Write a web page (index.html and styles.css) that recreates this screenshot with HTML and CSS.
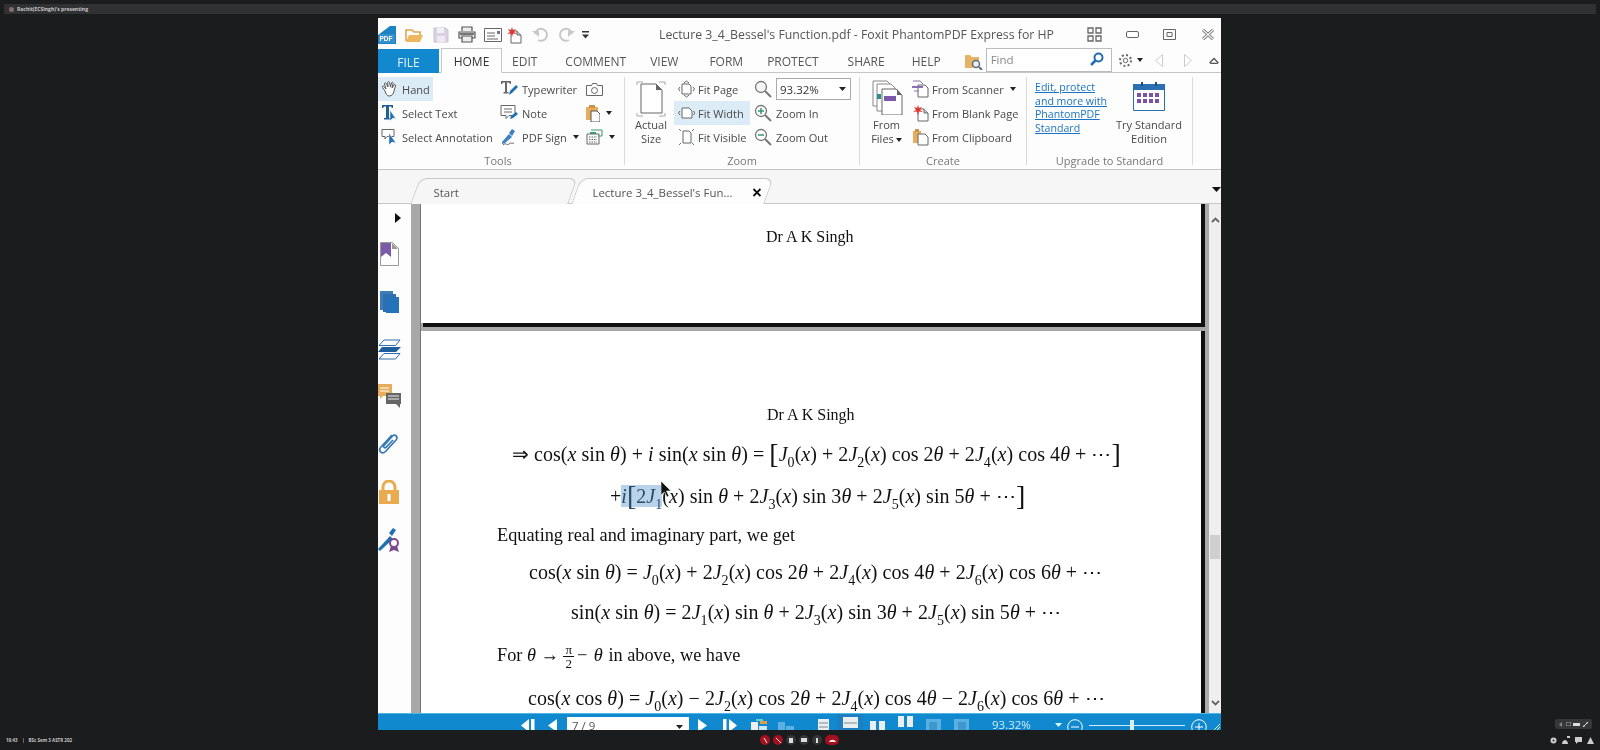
FILE: index.html
```html
<!DOCTYPE html>
<html lang="en">
<head>
<meta charset="utf-8">
<title>Lecture 3_4_Bessel's Function.pdf - Foxit PhantomPDF Express for HP</title>
<link rel="stylesheet" href="styles.css">
</head>
<body>
<header class="meetbar"><span class="meetdot"></span><span class="meetname">Rachit(ECSingh)'s presenting</span></header>

<div class="window">
  <div class="titlebar">
    <svg class="qa-logo" width="18" height="18" viewBox="0 0 18 18"><path d="M0 18V9L12 0h6v18z" fill="#1b82c4"/><path d="M1 8h16v9H1z" fill="#fff" opacity=".12"/><text x="1.5" y="15" class="logo-txt">PDF</text></svg>
    <svg class="qa ml9" width="19" height="16" viewBox="0 0 19 16"><path d="M1 14V3h6l2 2h6v3" fill="none" stroke="#e0a54c" stroke-width="1.6"/><path d="M1 15l3-7h14l-3 7z" fill="#efb75f"/></svg>
    <svg class="qa ml9" width="16" height="16" viewBox="0 0 16 16"><path d="M1 1h12l2 2v12H1z" fill="#d9d2e2" stroke="#c9c1d5"/><path d="M4 1h7v5H4z" fill="#f2eff5"/><path d="M4 9h8v6H4z" fill="#eee9f1"/></svg>
    <svg class="qa ml9" width="18" height="17" viewBox="0 0 18 17"><path d="M4 5V1h10v4M4 12H1V6h16v6h-3M4 10h10v6H4z" fill="#eee" stroke="#555" stroke-width="1.2"/><path d="M2 7h14v2H2z" fill="#777"/></svg>
    <svg class="qa ml8" width="18" height="14" viewBox="0 0 18 14"><path d="M.5.5h17v13H.5z" fill="#fff" stroke="#666"/><path d="M3 5h8M3 8h8M3 11h11" stroke="#666"/><path d="M13 3h3v3h-3z" fill="#777"/></svg>
    <svg class="qa ml4" width="16" height="18" viewBox="0 0 16 18"><path d="M5 5h6l4 4v8H5z" fill="#fff" stroke="#666"/><path d="M11 5v4h4" fill="#ccc" stroke="#666"/><path d="M6 1l1 3 3-1-2 3 3 2-4-.5L6 11 5 7.500 1 8l3-2-2-3 3 1z" fill="#e2332c"/></svg>
    <svg class="qa ml10" width="17" height="15" viewBox="0 0 17 15"><path d="M3 7a6 6 0 1 1 3 6" fill="none" stroke="#c9c9c9" stroke-width="2"/><path d="M0 4h7v6z" fill="#c9c9c9"/></svg>
    <svg class="qa ml9" width="17" height="15" viewBox="0 0 17 15"><path d="M14 7a6 6 0 1 0-3 6" fill="none" stroke="#c9c9c9" stroke-width="2"/><path d="M17 4h-7v6z" fill="#c9c9c9"/></svg>
    <svg class="qa ml7" width="7" height="8" viewBox="0 0 7 8"><path d="M0 0h7v1.500H0zM0 3.500h7L3.500 7.500z" fill="#333"/></svg>
    <span class="title">Lecture 3_4_Bessel's Function.pdf - Foxit PhantomPDF Express for HP</span>
    <svg class="ctl-grid" width="15" height="15" viewBox="0 0 15 15"><path d="M1 1h5v5H1zM9 1h5v5H9zM1 9h5v5H1zM9 9h5v5H9z" fill="none" stroke="#666" stroke-width="1.300"/></svg>
    <svg class="ctl ml24" width="13" height="7" viewBox="0 0 13 7"><rect x=".5" y=".5" width="12" height="6" rx="1.500" fill="#fff" stroke="#666"/></svg>
    <svg class="ctl ml24" width="13" height="11" viewBox="0 0 13 11"><path d="M.5.5h12v10H.5z" fill="none" stroke="#666"/><path d="M4 3.500h5v4H4z" fill="none" stroke="#666"/></svg>
    <svg class="ctl ml26" width="12" height="11" viewBox="0 0 12 11"><path d="M1 1l10 9M11 1L1 10" stroke="#666" stroke-width="3"/><path d="M1 1l10 9M11 1L1 10" stroke="#fff" stroke-width="1.200"/></svg>
  </div>

  <nav class="tabsrow">
    <span class="t-file">FILE</span>
    <span class="t-home">HOME</span>
    <span class="t-item t-edit">EDIT</span>
    <span class="t-item t-comment">COMMENT</span>
    <span class="t-item t-view">VIEW</span>
    <span class="t-item t-form">FORM</span>
    <span class="t-item t-protect">PROTECT</span>
    <span class="t-item t-share">SHARE</span>
    <span class="t-item t-help">HELP</span>
    <svg class="findfolder" width="18" height="16" viewBox="0 0 18 16"><path d="M0 14V1h5l2 2h7v4H8v7z" fill="#e6b264"/><circle cx="11" cy="10" r="3.500" fill="#eee" stroke="#5b6f80" stroke-width="1.500"/><path d="M14 13l3 3" stroke="#5b6f80" stroke-width="2"/></svg>
    <div class="findbox"><span class="findtxt">Find</span><svg width="14" height="14" viewBox="0 0 14 14"><circle cx="8.500" cy="5.500" r="4" fill="none" stroke="#1f6fb5" stroke-width="2"/><path d="M5.500 8.500L1 13" stroke="#1f6fb5" stroke-width="2.500"/></svg></div>
    <svg class="gear" width="15" height="15" viewBox="0 0 15 15"><circle cx="7.500" cy="7.500" r="2.200" fill="none" stroke="#666"/><circle cx="7.500" cy="7.500" r="5.500" fill="none" stroke="#666" stroke-width="2" stroke-dasharray="2 2.300"/></svg>
    <svg class="tri-d" width="6" height="4" viewBox="0 0 6 4"><path d="M0 0h6L3 4z" fill="#222"/></svg>
    <svg class="nav-l" width="8" height="13" viewBox="0 0 8 13"><path d="M7.500.5v12L.5 6.500z" fill="#fff" stroke="#ccc"/></svg>
    <svg class="nav-r" width="8" height="13" viewBox="0 0 8 13"><path d="M.5.5v12l7-6z" fill="#fff" stroke="#ccc"/></svg>
    <svg class="nav-c" width="10" height="7" viewBox="0 0 10 7"><path d="M1 5.500L5 1.500l4 4-1 1H2z" fill="none" stroke="#555" stroke-width="1.300"/></svg>
  </nav>

  <section class="ribbon">
    <div class="group g-tools">
      <div class="gbody">
        <div class="col c-t1">
          <div class="ri sel-hand"><svg class="ic" width="18" height="18" viewBox="0 0 18 18"><path d="M4 11L1.500 7.500c-.8-1 .6-2 1.500-1L5 9 3.500 4c-.3-1.200 1.300-1.700 1.800-.5L7 7l-.3-4.500c0-1.200 1.700-1.200 1.800 0L9.500 7l1-4c.3-1.100 1.800-.8 1.600.4L11 8l2-3c.7-1 2-.2 1.500.9L13 11c-.5 3-2 5-5 5-2 0-3-2-4-5z" fill="#fff" stroke="#555"/></svg><span>Hand</span></div>
          <div class="ri"><svg class="ic" width="18" height="18" viewBox="0 0 18 18"><path d="M1 1h11v3h-1l-1-1.500H8V14h2v1.500H3V14h2V2.500H3L2 4H1z" fill="#1f5f94"/><path d="M9 6v11l3-3 3 1z" fill="#1f6fb5" stroke="#fff" stroke-width=".5"/></svg><span>Select Text</span></div>
          <div class="ri"><svg class="ic" width="18" height="18" viewBox="0 0 18 18"><path d="M1 1.500h12v7H6l-2 2.500v-2.500H1z" fill="#fff" stroke="#666"/><path d="M8 5v12l3-3 4 1z" fill="#1f6fb5" stroke="#fff" stroke-width=".5"/></svg><span>Select Annotation</span></div>
        </div>
        <div class="col c-t2">
          <div class="ri"><svg class="ic" width="19" height="18" viewBox="0 0 19 18"><path d="M1 1h10v3h-1L9 2.500H7V12h1.500v1.500h-5V12H5V2.500H3L2 4H1z" fill="#666"/><path d="M9 15l1-4 6-6 2 2-6 6z" fill="#1f6fb5"/></svg><span>Typewriter</span></div>
          <div class="ri"><svg class="ic" width="19" height="18" viewBox="0 0 19 18"><path d="M1 1.500h14v10H9l-3 3v-3H1z" fill="#fff" stroke="#666"/><path d="M4 5h8M4 8h8" stroke="#666"/><path d="M10 15l1-3 5-4 2 2-5 4z" fill="#1f6fb5"/></svg><span>Note</span></div>
          <div class="ri"><svg class="ic" width="19" height="18" viewBox="0 0 19 18"><path d="M2 14l7-8 3 3-7 6-3 1z" fill="#3d7fbf"/><path d="M9 5l3-4 3 2-3 5z" fill="#3d7fbf"/><path d="M3 17c3-3 4 1 6-1s3 0 5-1" fill="none" stroke="#666"/></svg><span>PDF Sign</span><svg class="tri" width="6" height="4" viewBox="0 0 6 4"><path d="M0 0h6L3 4z" fill="#222"/></svg></div>
        </div>
        <div class="col c-t3">
          <div class="ri"><svg width="17" height="13" viewBox="0 0 17 13"><path d="M.5 2.500h5l1-2h4l1 2h5v10H.5z" fill="#fff" stroke="#666"/><circle cx="8.500" cy="7.500" r="3" fill="none" stroke="#666"/></svg></div>
          <div class="ri"><svg width="14" height="18" viewBox="0 0 14 18"><path d="M0 3h12v13H0z" fill="#e7ad5c"/><path d="M3 1h6v3H3z" fill="#c89449"/><path d="M5 7h6l3 3v8H5z" fill="#fff" stroke="#555"/></svg><svg class="tri" width="6" height="4" viewBox="0 0 6 4"><path d="M0 0h6L3 4z" fill="#222"/></svg></div>
          <div class="ri"><svg width="17" height="16" viewBox="0 0 17 16"><path d="M1 5h12v10H1z" fill="#fff" stroke="#666"/><path d="M3 8h8M3 10.500h8M3 13h8" stroke="#666" stroke-dasharray="1.500 1"/><path d="M5 1h11v6h-4" fill="none" stroke="#3b9a72"/><path d="M4 3h6v2H4z" fill="#3b9a72"/></svg><svg class="tri" width="6" height="4" viewBox="0 0 6 4"><path d="M0 0h6L3 4z" fill="#222"/></svg></div>
        </div>
      </div>
      <div class="glabel">Tools</div>
    </div>

    <div class="group g-zoom">
      <div class="gbody">
        <div class="big b-actual">
          <svg width="30" height="36" viewBox="0 0 30 36"><path d="M1 4V1h6M23 1h6v3M1 32v3h6M23 35h6v-3" fill="none" stroke="#aaa"/><path d="M5 3h15l6 6v23H5z" fill="#fff" stroke="#666"/><path d="M20 3v6h6z" fill="#666"/></svg>
          <span>Actual<br>Size</span>
        </div>
        <div class="col c-z1">
          <div class="ri"><svg class="ic" width="17" height="18" viewBox="0 0 17 18"><path d="M5 4h6l2 2v8H4V4z" fill="#fff" stroke="#666"/><path d="M6 3l2.500-2L11 3M6 15l2.500 2 2.500-2M2 7L.5 9 2 11M15 7l1.500 2L15 11" fill="none" stroke="#666"/></svg><span>Fit Page</span></div>
          <div class="ri sel-fit"><svg class="ic" width="17" height="18" viewBox="0 0 17 18"><path d="M4 4h7l3 3v7H4z" fill="#fff" stroke="#666"/><path d="M2 7L.5 9 2 11M15.500 7L17 9l-1.500 2" fill="none" stroke="#666"/></svg><span>Fit Width</span></div>
          <div class="ri"><svg class="ic" width="17" height="18" viewBox="0 0 17 18"><path d="M5 3h6l2 2v10H5z" fill="#fff" stroke="#666"/><path d="M1 1l2 2M16 1l-2 2M1 17l2-2M16 17l-2-2" stroke="#3b8a8a"/></svg><span>Fit Visible</span></div>
        </div>
        <div class="col c-z2">
          <div class="ri"><svg class="ic-m" width="18" height="18" viewBox="0 0 18 18"><circle cx="7" cy="7" r="5.500" fill="#f5f5f5" stroke="#777" stroke-width="1.300"/><path d="M11 11l6 6" stroke="#777" stroke-width="2"/></svg><div class="combo"><span>93.32%</span><svg width="7" height="4" viewBox="0 0 7 4"><path d="M0 0h7L3.500 4z" fill="#222"/></svg></div></div>
          <div class="ri"><svg class="ic-m" width="18" height="18" viewBox="0 0 18 18"><circle cx="7" cy="7" r="5.500" fill="#fff" stroke="#777" stroke-width="1.300"/><path d="M11 11l6 6" stroke="#777" stroke-width="2"/><path d="M4 7h6M7 4v6" stroke="#2f9a6e" stroke-width="1.500"/></svg><span>Zoom In</span></div>
          <div class="ri"><svg class="ic-m" width="18" height="18" viewBox="0 0 18 18"><circle cx="7" cy="7" r="5.500" fill="#fff" stroke="#777" stroke-width="1.300"/><path d="M11 11l6 6" stroke="#777" stroke-width="2"/><path d="M4 7h6" stroke="#2f9a6e" stroke-width="1.500"/></svg><span>Zoom Out</span></div>
        </div>
      </div>
      <div class="glabel">Zoom</div>
    </div>

    <div class="group g-create">
      <div class="gbody">
        <div class="big b-files">
          <svg width="32" height="36" viewBox="0 0 32 36"><path d="M2 2h14l3 3v22H2z" fill="#fff" stroke="#888"/><path d="M6 5h14l4 4v23H6z" fill="#fff" stroke="#888"/><path d="M11 10h14l6 6v20H11z" fill="#fff" stroke="#666"/><path d="M26 10v6h5z" fill="#666"/><path d="M6 15h4v5H6z" fill="#2a8f8f"/><path d="M13 17h12v5H13z" fill="#7a5aa8"/></svg>
          <span>From<br>Files<svg class="tri-s" width="6" height="4" viewBox="0 0 6 4"><path d="M0 0h6L3 4z" fill="#222"/></svg></span>
        </div>
        <div class="col c-c1">
          <div class="ri"><svg class="ic" width="17" height="18" viewBox="0 0 17 18"><path d="M6 5h7l3 3v9H6z" fill="#fff" stroke="#666"/><path d="M1 1h7l3 3" fill="none" stroke="#8a6db5"/><path d="M0 6h11v2H0z" fill="#8a6db5"/><path d="M2 11h5" stroke="#8a6db5"/></svg><span>From Scanner</span><svg class="tri" width="6" height="4" viewBox="0 0 6 4"><path d="M0 0h6L3 4z" fill="#222"/></svg></div>
          <div class="ri"><svg class="ic" width="17" height="18" viewBox="0 0 17 18"><path d="M6 5h6l4 4v8H6z" fill="#fff" stroke="#666"/><path d="M12 5v4h4" fill="#ccc" stroke="#666"/><path d="M6 1l1 3 3-1-2 3 3 2-4-.5L6 11 5 7.500 1 8l3-2-2-3 3 1z" fill="#e2332c"/></svg><span>From Blank Page</span></div>
          <div class="ri"><svg class="ic" width="17" height="18" viewBox="0 0 17 18"><path d="M1 3h8v12H1z" fill="#e7ad5c"/><path d="M3 1h4v3H3z" fill="#c89449"/><path d="M6 6h7l3 3v8H6z" fill="#fff" stroke="#666"/></svg><span>From Clipboard</span></div>
        </div>
      </div>
      <div class="glabel">Create</div>
    </div>

    <div class="group g-up">
      <div class="gbody">
        <a class="uplink" href="#">Edit, protect<br>and more with<br>PhantomPDF<br>Standard</a>
        <div class="big b-try">
          <svg width="32" height="29" viewBox="0 0 32 29"><path d="M.5 2.500h31v26H.5z" fill="#fff" stroke="#2a6fb0"/><path d="M0 2h32v6H0z" fill="#2a6fb0"/><path d="M8 0h2v4H8zM22 0h2v4h-2z" fill="#1d4f80"/><path d="M4 11h4v4H4zM10 11h4v4h-4zM16 11h4v4h-4zM22 11h4v4h-4zM4 17h4v4H4zM10 17h4v4h-4zM16 17h4v4h-4zM22 17h4v4h-4z" fill="#7b52a6"/></svg>
          <span>Try Standard<br>Edition</span>
        </div>
      </div>
      <div class="glabel">Upgrade to Standard</div>
    </div>
  </section>

  <div class="docstrip">
    <div class="doctab d-start"><span>Start</span></div>
    <div class="doctab d-cur"><span>Lecture 3_4_Bessel's Fun...</span><svg class="tabx" width="9" height="9" viewBox="0 0 9 9"><path d="M1 1l7 7M8 1L1 8" stroke="#111" stroke-width="1.800"/></svg></div>
    <svg class="stripdrop" width="9" height="5" viewBox="0 0 9 5"><path d="M0 0h9L4.500 5z" fill="#111"/></svg>
  </div>

  <div class="main">
    <aside class="side">
      <svg class="sd-arrow" width="6" height="10" viewBox="0 0 6 10"><path d="M0 0l6 5-6 5z" fill="#111"/></svg>
      <svg class="sd-in2" width="19" height="24" viewBox="0 0 19 24"><path d="M.5.500h12l6 6v17H.5z" fill="#fff" stroke="#999"/><path d="M1 1h10v14l-5-4-5 4z" fill="#7b5aa8"/><path d="M12 1v6h6z" fill="#999"/></svg>
      <svg class="sd-in1" width="20" height="23" viewBox="0 0 20 23"><path d="M1 1h13v4H5v15H1z" fill="#3d7cb8"/><path d="M4 4h13v3H8v15H4z" fill="#2f6fae"/><path d="M7 7h13v16H7z" fill="#2472b8"/></svg>
      <svg width="23" height="23" viewBox="0 0 23 23"><path d="M6 3h16l-4.500 5.500H1z" fill="#fff" stroke="#2f6fae"/><path d="M4 10h19l-5 5H0z" fill="#1f5f9e"/><path d="M6 16.500h16L17.500 22H1z" fill="#fff" stroke="#2f6fae"/></svg>
      <svg width="23" height="24" viewBox="0 0 23 24"><path d="M0 0h14v12H5l-3 3v-3H0z" fill="#e7ad5c"/><path d="M2 4h9M2 7h9" stroke="#fff"/><path d="M8 9h15v11h-1v4l-4-4H8z" fill="#666"/><path d="M10 12h11M10 15h11" stroke="#eee"/></svg>
      <svg width="21" height="24" viewBox="0 0 21 24"><path d="M14 3L3 15c-3.500 3.500 1 8 4.500 4.500L18 8c2.500-3-1-6.500-3.500-4L6 13.500c-1.200 1.500.8 3 2 1.800L15 8" fill="none" stroke="#3578b5" stroke-width="1.700"/></svg>
      <svg class="sd-in1" width="20" height="24" viewBox="0 0 20 24"><path d="M4 11V7a6 6 0 0 1 12 0v4" fill="none" stroke="#e8ab4f" stroke-width="3"/><path d="M0 10h20v14H0z" fill="#e8ab4f"/><path d="M8.500 14h3v7h-3z" fill="#fff"/></svg>
      <svg width="22" height="24" viewBox="0 0 22 24"><path d="M0 21l12-13 3 3L2 23z" fill="#1f6fb5"/><path d="M11 5l4-5 3 2-4 6z" fill="#1f6fb5"/><circle cx="16" cy="15" r="4" fill="#fff" stroke="#7b4a8c" stroke-width="2"/><path d="M13 18l-2 6 5-2 5 2-2-6" fill="#7b4a8c"/></svg>
    </aside>

    <div class="gutter-l"></div>

    <div class="doc">
      <div class="page p1"><p class="author a1">Dr A K Singh</p></div>
      <div class="pagegap"></div>
      <div class="page p2">
        <p class="author a2">Dr A K Singh</p>
        <p class="m l1">⇒ cos(<i>x</i> sin <i>θ</i>) + <i>i</i> sin(<i>x</i> sin <i>θ</i>) = <b class="br">[</b><i>J</i><sub>0</sub>(<i>x</i>) + 2<i>J</i><sub>2</sub>(<i>x</i>) cos 2<i>θ</i> + 2<i>J</i><sub>4</sub>(<i>x</i>) cos 4<i>θ</i> + ⋯<b class="br">]</b></p>
        <p class="m l2">+<mark class="hl"><i>i</i><b class="br">[</b>2<i>J</i><sub>1</sub></mark>(<i>x</i>) sin <i>θ</i> + 2<i>J</i><sub>3</sub>(<i>x</i>) sin 3<i>θ</i> + 2<i>J</i><sub>5</sub>(<i>x</i>) sin 5<i>θ</i> + ⋯<b class="br">]</b></p>
        <p class="tx t1">Equating real and imaginary part, we get</p>
        <p class="m l4">cos(<i>x</i> sin <i>θ</i>) = <i>J</i><sub>0</sub>(<i>x</i>) + 2<i>J</i><sub>2</sub>(<i>x</i>) cos 2<i>θ</i> + 2<i>J</i><sub>4</sub>(<i>x</i>) cos 4<i>θ</i> + 2<i>J</i><sub>6</sub>(<i>x</i>) cos 6<i>θ</i> + ⋯</p>
        <p class="m l5">sin(<i>x</i> sin <i>θ</i>) = 2<i>J</i><sub>1</sub>(<i>x</i>) sin <i>θ</i> + 2<i>J</i><sub>3</sub>(<i>x</i>) sin 3<i>θ</i> + 2<i>J</i><sub>5</sub>(<i>x</i>) sin 5<i>θ</i> + ⋯</p>
        <p class="tx t2">For <i>θ</i> → <span class="frac"><span class="fn">π</span><span class="fd">2</span></span><span class="mn">−</span> <i>θ</i> <span class="after">in above, we have</span></p>
        <p class="m l7">cos(<i>x</i> cos <i>θ</i>) = <i>J</i><sub>0</sub>(<i>x</i>) − 2<i>J</i><sub>2</sub>(<i>x</i>) cos 2<i>θ</i> + 2<i>J</i><sub>4</sub>(<i>x</i>) cos 4<i>θ</i> − 2<i>J</i><sub>6</sub>(<i>x</i>) cos 6<i>θ</i> + ⋯</p>
      </div>
      <svg class="cursor" width="10" height="16" viewBox="0 0 10 16"><path d="M0 0v14l3.500-3 2.500 5 2-1-2.500-5H10z" fill="#111" stroke="#fff" stroke-width=".6"/></svg>
    </div>

    <div class="gutter-r"></div>

    <div class="vscroll">
      <svg width="9" height="6" viewBox="0 0 9 6"><path d="M1 5l3.500-3.500L8 5" fill="none" stroke="#666" stroke-width="1.800"/></svg>
      <div class="thumb"></div>
      <svg width="9" height="6" viewBox="0 0 9 6"><path d="M1 1l3.500 3.500L8 1" fill="none" stroke="#666" stroke-width="1.800"/></svg>
    </div>
  </div>

  <footer class="status">
    <svg class="s-first" width="14" height="13" viewBox="0 0 14 13"><path d="M0 6.500L8 0v13zM10 0h3.500v13H10z" fill="#fff"/></svg>
    <svg class="s-prev" width="9" height="13" viewBox="0 0 9 13"><path d="M0 6.500L9 0v13z" fill="#fff"/></svg>
    <div class="pagebox"><span>7 / 9</span><svg width="7" height="4" viewBox="0 0 7 4"><path d="M0 0h7L3.500 4z" fill="#222"/></svg></div>
    <svg class="s-next" width="9" height="13" viewBox="0 0 9 13"><path d="M9 6.500L0 0v13z" fill="#fff"/></svg>
    <svg class="s-last" width="14" height="13" viewBox="0 0 14 13"><path d="M14 6.500L6 0v13zM0 0h3.500v13H0z" fill="#fff"/></svg>
    <svg class="s-a" width="16" height="14" viewBox="0 0 16 14"><path d="M0 3h7v11H0z" fill="#eee"/><path d="M9 2h7v3H9z" fill="#e0a040"/><path d="M8 7h8v7H8z" fill="#cfe6f5"/><path d="M5 0h7v2H5z" fill="#6cc"/></svg>
    <svg class="s-b" width="16" height="14" viewBox="0 0 16 14"><path d="M0 3h7v8H0z" fill="#5bb0e2"/><path d="M8 7h8v7H8z" fill="#5bb0e2"/></svg>
    <svg class="s-c" width="11" height="14" viewBox="0 0 11 14"><path d="M0 0h11v14H0z" fill="#e8eef2"/><path d="M1 4h9M1 8h9" stroke="#888"/></svg>
    <div class="s-on"><svg width="15" height="11" viewBox="0 0 15 11"><path d="M0 0h15v11H0z" fill="#e8eef2"/><path d="M1 6h13" stroke="#888"/></svg></div>
    <svg class="s-d" width="15" height="14" viewBox="0 0 15 14"><path d="M0 2h6v12H0zM9 2h6v12H9z" fill="#e8eef2"/></svg>
    <svg class="s-e" width="15" height="12" viewBox="0 0 15 12"><path d="M0 0h6v11H0zM9 0h6v11H9z" fill="#e8eef2"/></svg>
    <svg class="s-f" width="15" height="14" viewBox="0 0 15 14"><path d="M0 0h15v14H0z" fill="#5bb0e2"/><path d="M3 3h8v8H3z" fill="#3d98cf"/></svg>
    <svg class="s-g" width="15" height="14" viewBox="0 0 15 14"><path d="M0 0h15v14H0z" fill="#5bb0e2"/><path d="M4 3h8v8H4z" fill="#3d98cf"/></svg>
    <span class="s-zoom">93.32%</span>
    <svg class="s-dd" width="7" height="4" viewBox="0 0 7 4"><path d="M0 0h7L3.500 4z" fill="#dff"/></svg>
    <svg class="s-minus" width="16" height="16" viewBox="0 0 16 16"><circle cx="8" cy="8" r="7.300" fill="none" stroke="#fff"/><path d="M4 8h8" stroke="#fff"/></svg>
    <div class="slider"><div class="knob"></div></div>
    <svg class="s-plus" width="16" height="16" viewBox="0 0 16 16"><circle cx="8" cy="8" r="7.300" fill="none" stroke="#fff"/><path d="M4 8h8M8 4v8" stroke="#fff"/></svg>
    <svg class="s-grip" width="6" height="6" viewBox="0 0 6 6"><path d="M6 0L0 6M6 3L3 6" stroke="#dff"/></svg>
  </footer>
</div>

<div class="pill">
  <svg width="4" height="5" viewBox="0 0 4 5"><path d="M3 0L0 2.500 3 5z" fill="#888"/></svg>
  <svg width="5" height="4" viewBox="0 0 5 4"><path d="M0 0h5v4H0z" fill="none" stroke="#999"/></svg>
  <svg width="7" height="3" viewBox="0 0 7 3"><path d="M0 0h7v3H0z" fill="#ddd"/></svg>
  <svg width="5" height="5" viewBox="0 0 5 5"><path d="M0 5l5-5M3 0h2v2M0 3v2h2" stroke="#ddd"/></svg>
</div>

<footer class="meetfoot">
  <div class="mf-left"><span>10:43</span><span class="mf-sep"></span><span>BSc Sem 3 ASTR 202</span></div>
  <div class="mf-mid">
    <span class="dot red"><svg width="5" height="5" viewBox="0 0 5 5"><path d="M1 0l3 5" stroke="#eee"/></svg></span>
    <span class="dot red"><svg width="5" height="5" viewBox="0 0 5 5"><path d="M0 0l5 5" stroke="#eee"/></svg></span>
    <span class="dot"><svg width="4" height="5" viewBox="0 0 4 5"><path d="M0 0h4v5H0z" fill="#ddd"/></svg></span>
    <span class="dot"><svg width="6" height="4" viewBox="0 0 6 4"><path d="M0 0h6v4H0z" fill="#ddd"/></svg></span>
    <span class="dot"><svg width="2" height="5" viewBox="0 0 2 5"><path d="M0 0h2v5H0z" fill="#ddd"/></svg></span>
    <span class="dot red pillred"><svg width="7" height="3" viewBox="0 0 7 3"><path d="M0 3c1-3 6-3 7 0z" fill="#eee"/></svg></span>
  </div>
  <div class="mf-right">
    <svg width="7" height="7" viewBox="0 0 7 7"><circle cx="3.500" cy="3.500" r="3" fill="#ccc"/><circle cx="3.500" cy="3.500" r="1" fill="#333"/></svg>
    <svg width="8" height="8" viewBox="0 0 8 8"><path d="M0 8c0-3 2-4 3-4s3 1 3 4zM5 0h3v2H5z" fill="#ccc"/></svg>
    <svg width="7" height="7" viewBox="0 0 7 7"><path d="M0 0h7v5H3L1 7V5H0z" fill="#ccc"/></svg>
    <svg width="7" height="7" viewBox="0 0 7 7"><path d="M3.500 0L7 7H0z" fill="#ccc"/></svg>
  </div>
</footer>
</body>
</html>
```

FILE: styles.css
```css
* { box-sizing: border-box; }
html, body { margin: 0; padding: 0; }
p { margin: 0; }
body {
  position: relative;
  width: 1600px;
  height: 750px;
  overflow: hidden;
  background: #1b1c1e;
  font-family: "Open Sans", "Noto Sans", sans-serif;
  color: #444;
}

/* meeting chrome */
.meetbar {
  margin: 4px 4px 0;
  height: 10px;
  background: #2f3133;
  display: flex;
  align-items: center;
  padding-left: 5px;
  gap: 3px;
}
.meetdot { width: 5px; height: 5px; border-radius: 50%; background: #8a6a6a; }
.meetname { font-size: 5px; line-height: 10px; color: #c8c8c8; font-weight: 700; white-space: nowrap; }

.pill {
  position: absolute;
  left: 1555px;
  top: 719px;
  width: 37px;
  height: 10px;
  background: #353739;
  border-radius: 2px;
  display: flex;
  align-items: center;
  justify-content: space-between;
  padding: 0 4px;
}
.meetfoot {
  position: absolute;
  left: 0;
  right: 0;
  top: 730px;
  height: 20px;
  display: flex;
  align-items: center;
}
.mf-left { width: 760px; padding-left: 6px; display: flex; align-items: center; font-size: 4.500px; font-weight: 700; color: #c8c8c8; white-space: nowrap; }
.mf-sep { width: 1px; height: 5px; background: #666; margin: 0 5px; }
.mf-mid { display: flex; align-items: center; gap: 3px; width: 790px; }
.dot { width: 10px; height: 10px; border-radius: 50%; background: #333537; display: flex; align-items: center; justify-content: center; }
.red { background: #a5101e; }
.pillred { width: 14px; border-radius: 5px; }
.mf-right { display: flex; align-items: center; gap: 5px; }

/* window */
.window {
  position: absolute;
  left: 378px;
  top: 18px;
  width: 843px;
  height: 712px;
  background: #fdfdfd;
  display: flex;
  flex-direction: column;
  overflow: hidden;
  filter: blur(.4px);
}
.titlebar {
  height: 30px;
  display: flex;
  align-items: center;
  flex: none;
  padding-top: 3px;
}
.logo-txt { font: 700 6.500px "Liberation Sans", sans-serif; fill: #fff; }
.ml4 { margin-left: 4px; }
.ml7 { margin-left: 7px; }
.ml8 { margin-left: 8px; }
.ml9 { margin-left: 9px; }
.ml10 { margin-left: 10px; }
.ml24 { margin-left: 24px; }
.ml26 { margin-left: 26px; }
.title { margin-left: 70px; font-size: 12.300px; color: #555; white-space: nowrap; width: 400px; flex: none; }
.ctl-grid { margin-left: 28px; }

.tabsrow {
  height: 25px;
  flex: none;
  display: flex;
  align-items: center;
  font-size: 12px;
  color: #555;
  border-bottom: 1px solid #c6c6c6;
}
.t-file { width: 61px; height: 24px; background: #1288cf; color: #e8f4fb; text-align: center; line-height: 27px; margin-top: 1px; flex: none; }
.t-home { width: 61px; height: 25px; margin: 1px 0 0 2px; border: 1px solid #c6c6c6; border-bottom: 1px solid #fdfdfd; text-align: center; line-height: 26px; color: #333; background: #fdfdfd; flex: none; }
.t-item { white-space: nowrap; line-height: 24px; padding-top: 3px; flex: none; }
.t-edit { margin-left: 10px; }
.t-comment { margin-left: 28px; }
.t-view { margin-left: 24px; }
.t-form { margin-left: 31px; }
.t-protect { margin-left: 24px; }
.t-share { margin-left: 29px; }
.t-help { margin-left: 27px; }
.findfolder { margin: 3px 0 0 24px; flex: none; }
.findbox { width: 126px; height: 24px; border: 1px solid #bcbcbc; margin-left: 3px; display: flex; align-items: center; justify-content: space-between; padding: 0 7px 2px 4px; background: #fff; font-size: 11.500px; color: #888; flex: none; }
.gear { margin-left: 6px; }
.tri-d { margin-left: 4px; }
.nav-l { margin-left: 12px; }
.nav-r { margin-left: 21px; }
.nav-c { margin-left: 17px; }

.ribbon {
  height: 97px;
  flex: none;
  display: flex;
  border-bottom: 1px solid #c4c4c4;
  font-size: 11.050px;
  color: #4a4a4a;
  padding-top: 4px;
}
.group { display: flex; flex-direction: column; border-right: 1px solid #dadada; height: 88px; flex: none; }
.g-tools { width: 247px; }
.g-zoom { width: 235px; }
.g-create { width: 167px; }
.g-up { width: 166px; }
.gbody { flex: 1; display: flex; }
.glabel { height: 16px; line-height: 24px; text-align: center; color: #777; font-size: 11px; }
.g-tools .glabel { padding-right: 6px; }
.col { display: flex; flex-direction: column; flex: none; }
.ri { height: 24px; display: flex; align-items: center; white-space: nowrap; flex: none; }
.ic { margin-right: 3px; flex: none; }
.ic-m { margin-right: 4px; flex: none; }
.tri { margin-left: 6px; flex: none; }
.tri-s { margin-left: 2px; vertical-align: middle; }
.c-t1 { width: 122px; padding-left: 3px; }
.sel-hand { background: #dcecf7; margin-left: -3px; padding-left: 3px; width: 55px; }
.c-t2 { width: 86px; }
.c-t3 { width: 38px; }
.big { display: flex; flex-direction: column; align-items: center; text-align: center; line-height: 14px; flex: none; }
.big span { margin-top: 2px; white-space: nowrap; }
.b-actual { width: 49px; padding: 4px 0 0 3px; }
.b-actual span { margin-top: 1px; }
.c-z1 { width: 77px; padding-left: 4px; }
.sel-fit { background: #dcecf7; margin-left: -4px; padding-left: 4px; width: 76px; }
.c-z2 { width: 100px; padding-left: 3px; }
.combo { width: 79px; height: 22px; border: 1px solid #aaa; background: #fff; display: flex; align-items: center; justify-content: space-between; padding: 0 4px 0 3px; color: #333; font-size: 11.500px; }
.b-files { width: 52px; padding: 2px 0 0 1px; }
.b-files span { margin-top: 3px; }
.c-c1 { width: 110px; }
.uplink { margin: 4px 0 0 8px; width: 74px; font-size: 10.600px; line-height: 13.500px; color: #1c74c4; text-decoration: underline; white-space: nowrap; flex: none; }
.b-try { width: 80px; padding-top: 5px; }
.b-try span { margin-top: 7px; }

.docstrip {
  height: 34px;
  flex: none;
  background: #f6f6f6;
  border-bottom: 1px solid #c8c8c8;
  display: flex;
  align-items: flex-end;
  position: relative;
  padding-left: 37px;
  font-size: 11.450px;
  color: #555;
}
.doctab {
  height: 26px;
  margin-bottom: -1px;
  display: flex;
  align-items: center;
  border: 1px solid #c8c8c8;
  border-bottom: none;
  border-radius: 8px 8px 0 0;
  transform: skewX(-20deg);
  background: #f6f6f6;
  padding-top: 2px;
}
.doctab span { transform: skewX(20deg); white-space: nowrap; }
.d-start { width: 158px; padding-left: 18px; flex: none; }
.d-cur { width: 193px; margin-left: 3px; padding-left: 16px; background: #fdfdfd; flex: none; }
.d-cur .tabx { transform: skewX(20deg); margin-left: 20px; }
.stripdrop { position: absolute; right: 0; top: 17px; }

.main { flex: 1; min-height: 0; display: flex; overflow: hidden; }
.side { width: 33px; flex: none; background: #fdfdfd; display: flex; flex-direction: column; align-items: flex-start; padding-top: 9px; gap: 24px; }
.side svg { flex: none; }
.sd-arrow { margin: 0 0 -5px 17px; }
.sd-in1 { margin-left: 1px; }
.sd-in2 { margin-left: 2px; }
.gutter-l { width: 10px; flex: none; background: #a8a8a8; border-right: 1px solid #777; }
.doc { width: 784px; flex: none; position: relative; overflow: hidden; background: #a8a8a8; }
.gutter-r { width: 4px; flex: none; background: #aaa; }
.vscroll { flex: 1; background: #efefef; display: flex; flex-direction: column; align-items: center; padding: 13px 0 7px; position: relative; }
.vscroll svg { flex: none; }
.thumb { width: 10px; height: 24px; background: #cfcfcf; margin: 312px 0 auto; }

.page { background: #fff; border-right: 4px solid #111; color: #111; font-family: "Liberation Serif", "Times New Roman", serif; overflow: hidden; }
.p1 { height: 119px; }
.pagegap { height: 8px; background: linear-gradient(#111 4px, #a8a8a8 4px); margin-left: 2px; }
.p2 { height: 400px; padding-left: 76px; position: relative; }
.page p { white-space: nowrap; }
.author { font-size: 16px; line-height: 20px; }
.a1 { margin: 23px 0 0 345px; }
.a2 { margin: 74px 0 0 270px; }
.m { font-size: 20px; line-height: 24px; letter-spacing: .04px; }
.m sub { font-size: 14px; line-height: 0; vertical-align: -6px; }
.br { font-weight: 400; font-size: 28px; line-height: 0; vertical-align: -2px; }
.hl { background: #b9d4ea; color: #2a4a6a; }
.l1 { margin: 17px 0 0 15px; }
.l2 { margin: 18px 0 0 113px; }
.tx { font-size: 18.300px; line-height: 22px; }
.t1 { margin: 16px 0 0; }
.l4 { margin: 14px 0 0 32px; }
.l5 { margin: 16px 0 0 74px; }
.t2 { margin: 19px 0 0; }
.l7 { margin: 16px 0 0 31px; }
.frac { display: inline-flex; flex-direction: column; align-items: center; vertical-align: middle; font-size: 13px; line-height: 13px; }
.fn { border-bottom: 1px solid #111; padding: 0 2px; }
.mn { margin: 0 2px 0 3px; }
.after { margin-left: 1px; }
.cursor { position: absolute; left: 240px; top: 277px; }

.status {
  height: 17px;
  flex: none;
  background: #1089cf;
  display: flex;
  align-items: flex-start;
  border-top: 1px solid #4db7e6;
  overflow: hidden;
  color: #cfeaf8;
  font-size: 11.500px;
}
.status > * { flex: none; margin-top: 5px; }
.s-first { margin-left: 143px; }
.s-prev { margin-left: 13px; }
.status .pagebox { margin-left: 10px; margin-top: 3px; width: 122px; height: 20px; background: #fff; color: #555; display: flex; justify-content: space-between; padding: 0 6px 0 5px; line-height: 17px; }
.pagebox svg { margin-top: 8px; }
.s-next { margin-left: 9px; }
.s-last { margin-left: 16px; }
.s-a { margin-left: 14px; }
.s-b { margin-left: 11px; }
.s-c { margin-left: 24px; }
.status .s-on { margin: 0 0 0 8px; width: 26px; height: 16px; background: #1e7fc0; display: flex; justify-content: center; padding-top: 3px; }
.s-d { margin-left: 7px; }
.status .s-e { margin-left: 13px; margin-top: 2px; }
.s-f { margin-left: 13px; }
.s-g { margin-left: 13px; }
.status .s-zoom { margin: 4px 0 0 23px; line-height: 14px; }
.status .s-dd { margin: 9px 0 0 24px; }
.status .s-minus { margin: 5px 0 0 5px; }
.status .slider { margin: 11px 0 0 6px; width: 96px; height: 1px; background: #cfeaf8; position: relative; overflow: visible; }
.knob { position: absolute; left: 41px; top: -5px; width: 4px; height: 11px; background: #d8eef9; }
.status .s-plus { margin: 5px 0 0 6px; }
.status .s-grip { margin: 10px 0 0 7px; }
```
